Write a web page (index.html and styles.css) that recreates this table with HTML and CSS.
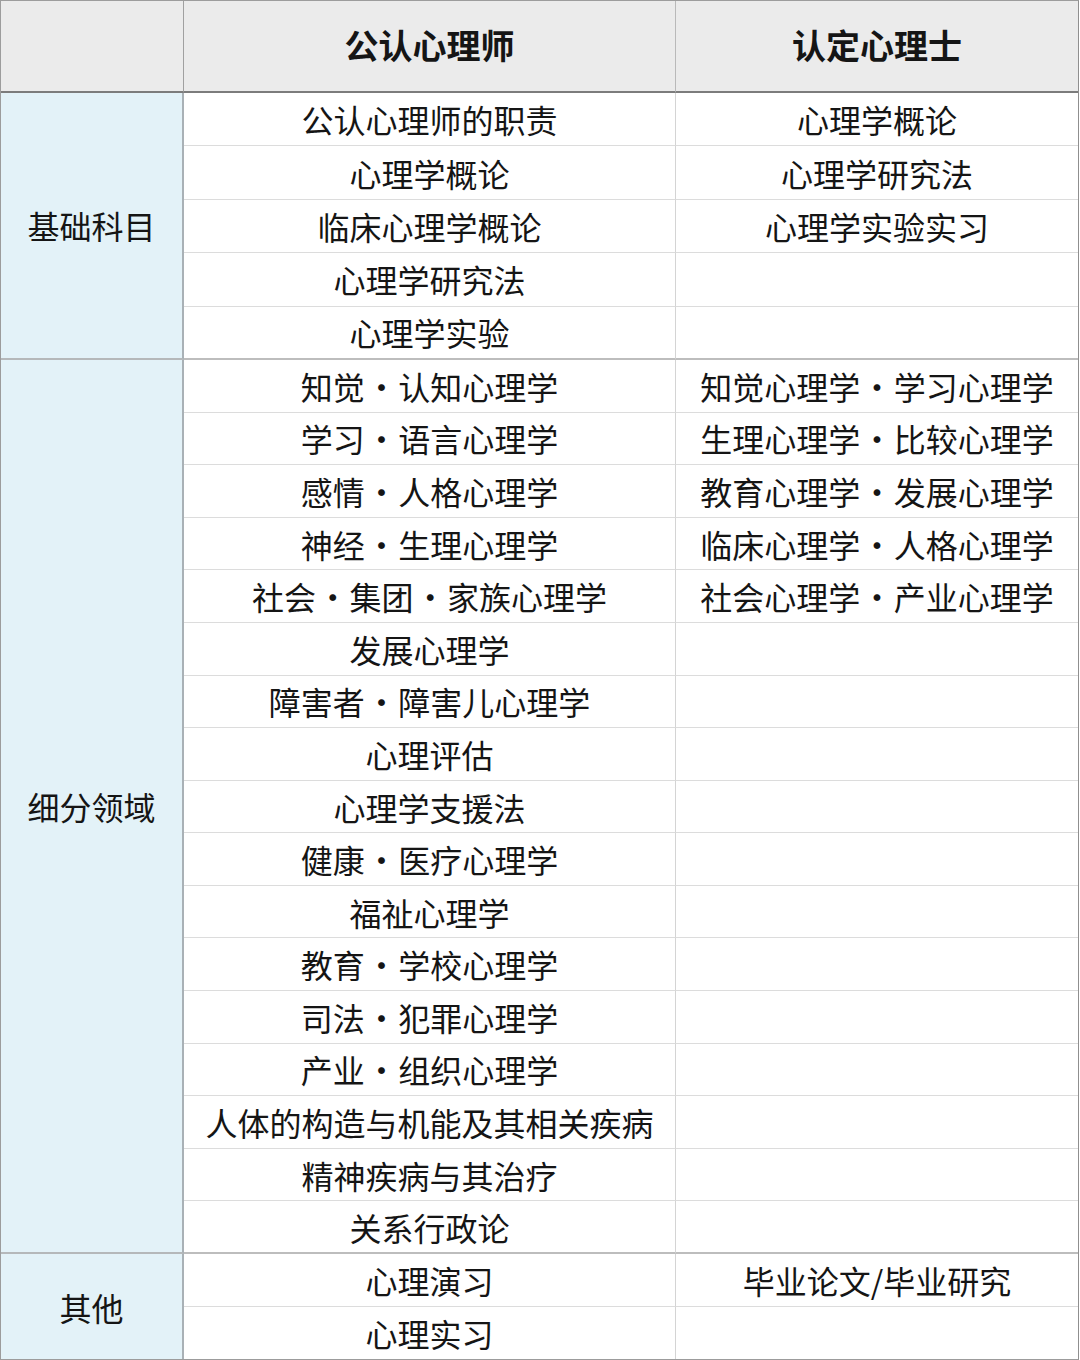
FILE: index.html
```html
<!DOCTYPE html>
<html lang="zh-CN">
<head>
<meta charset="utf-8">
<title>公认心理师 / 认定心理士</title>
<link rel="stylesheet" href="styles.css">
</head>
<body>
<div class="table">
  <div class="cell head corner"></div>
  <div class="cell head">公认心理师</div>
  <div class="cell head last-col">认定心理士</div>

  <div class="cell cat" style="grid-row: 2 / span 5">基础科目</div>
  <div class="cell mid">公认心理师的职责</div><div class="cell right">心理学概论</div>
  <div class="cell mid">心理学概论</div><div class="cell right">心理学研究法</div>
  <div class="cell mid">临床心理学概论</div><div class="cell right">心理学实验实习</div>
  <div class="cell mid">心理学研究法</div><div class="cell right"></div>
  <div class="cell mid group-end">心理学实验</div><div class="cell right group-end"></div>

  <div class="cell cat" style="grid-row: 7 / span 17">细分领域</div>
  <div class="cell mid">知觉<span class="dot">·</span>认知心理学</div><div class="cell right">知觉心理学<span class="dot">·</span>学习心理学</div>
  <div class="cell mid">学习<span class="dot">·</span>语言心理学</div><div class="cell right">生理心理学<span class="dot">·</span>比较心理学</div>
  <div class="cell mid">感情<span class="dot">·</span>人格心理学</div><div class="cell right">教育心理学<span class="dot">·</span>发展心理学</div>
  <div class="cell mid">神经<span class="dot">·</span>生理心理学</div><div class="cell right">临床心理学<span class="dot">·</span>人格心理学</div>
  <div class="cell mid">社会<span class="dot">·</span>集团<span class="dot">·</span>家族心理学</div><div class="cell right">社会心理学<span class="dot">·</span>产业心理学</div>
  <div class="cell mid">发展心理学</div><div class="cell right"></div>
  <div class="cell mid">障害者<span class="dot">·</span>障害儿心理学</div><div class="cell right"></div>
  <div class="cell mid">心理评估</div><div class="cell right"></div>
  <div class="cell mid">心理学支援法</div><div class="cell right"></div>
  <div class="cell mid">健康<span class="dot">·</span>医疗心理学</div><div class="cell right"></div>
  <div class="cell mid">福祉心理学</div><div class="cell right"></div>
  <div class="cell mid">教育<span class="dot">·</span>学校心理学</div><div class="cell right"></div>
  <div class="cell mid">司法<span class="dot">·</span>犯罪心理学</div><div class="cell right"></div>
  <div class="cell mid">产业<span class="dot">·</span>组织心理学</div><div class="cell right"></div>
  <div class="cell mid">人体的构造与机能及其相关疾病</div><div class="cell right"></div>
  <div class="cell mid">精神疾病与其治疗</div><div class="cell right"></div>
  <div class="cell mid group-end">关系行政论</div><div class="cell right group-end"></div>

  <div class="cell cat last-row" style="grid-row: 24 / span 2">其他</div>
  <div class="cell mid">心理演习</div><div class="cell right">毕业论文/毕业研究</div>
  <div class="cell mid last-row">心理实习</div><div class="cell right last-row"></div>
</div>
</body>
</html>
```

FILE: styles.css
```css
html, body {
  margin: 0;
  padding: 0;
  background: #ffffff;
}

.table {
  box-sizing: border-box;
  width: 1079px;
  height: 1360px;
  border: 1px solid #9c9c9c;
  border-right-color: #8f8f8f;
  display: grid;
  grid-template-columns: 183px 492px 1fr;
  grid-template-rows: 92px repeat(5, 53.4px) repeat(17, 52.6px) repeat(2, 1fr);
  font-family: "Noto Sans CJK SC", "Noto Sans", sans-serif;
  color: #151515;
}

.cell {
  display: flex;
  align-items: center;
  justify-content: center;
  box-sizing: border-box;
  font-size: 32px;
  line-height: 1;
  white-space: nowrap;
  border-bottom: 1px solid #dcdcdc;
  border-right: 1px solid #d4d4d4;
  background: #ffffff;
}

.dot {
  display: inline-block;
  width: 1.05em;
  text-align: center;
}

.head {
  background: #ebebeb;
  font-weight: 700;
  font-size: 34px;
  border-bottom: 2px solid #7c7c7c;
  border-right: 1px solid #b9b9b9;
  padding-bottom: 2px;
}

.head.corner {
  border-right: 1px solid #a0a0a0;
}

.cat {
  grid-column: 1;
  background: #e3f2f8;
  border-right: 2px solid #a9b1b6;
  border-bottom: 2px solid #b5b8ba;
}

.mid {
  grid-column: 2;
}

.right {
  grid-column: 3;
  border-right: none;
}

.last-col {
  border-right: none;
}

.group-end {
  border-bottom: 2px solid #bdbdbd;
}

.last-row {
  border-bottom: none;
}
```
